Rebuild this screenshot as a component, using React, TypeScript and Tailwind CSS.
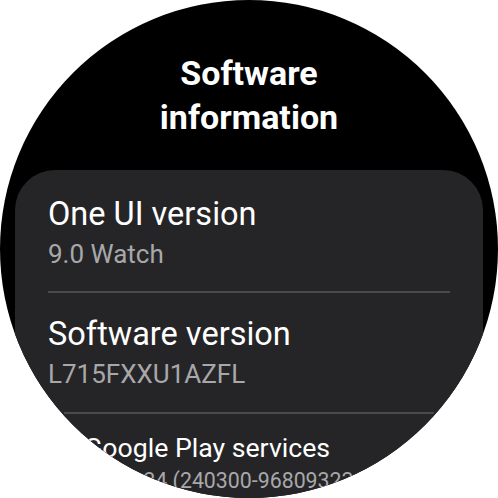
import React from "react";

const Row = ({ title, value }: { title: string; value: string }) => (
  <div className="px-[33px]">
    <div className="text-white text-[32.5px] leading-[38px] whitespace-nowrap">{title}</div>
    <div className="mt-[4px] text-[#a8a8aa] text-[26px] leading-[34px] whitespace-nowrap">{value}</div>
  </div>
);

export default function App() {
  return (
    <div className="w-[498px] h-[498px] bg-white" style={{ fontFamily: "Roboto, 'Noto Sans', sans-serif" }}>
      <div className="w-[498px] h-[498px] rounded-full bg-black overflow-hidden flex flex-col">
        <h1 className="pt-[51px] pb-[1px] text-center text-white font-bold text-[34px] leading-[44px]">
          Software
          <br />
          information
        </h1>
        <div className="mt-[30px] mx-[15px] flex-1 rounded-t-[40px] bg-[#252527] pt-[25px]">
          <div className="pb-[20px]">
            <Row title="One UI version" value="9.0 Watch" />
          </div>
          <div className="mx-[33px] h-[2px] bg-[#4a4a4c]" />
          <div className="pt-[22px] pb-[21px]">
            <Row title="Software version" value="L715FXXU1AZFL" />
          </div>
          <div className="mx-[33px] h-[2px] bg-[#4a4a4c] scale-x-[0.92]" />
          <div className="pt-[22px] origin-top scale-[0.82]">
            <Row title="Google Play services" value="24.09.24 (240300-968093236)" />
          </div>
        </div>
      </div>
    </div>
  );
}
